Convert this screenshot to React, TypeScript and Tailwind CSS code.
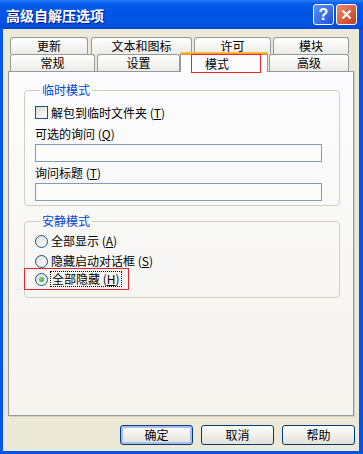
import React from "react";

function Tab({ label, w, ml = 0 }: { label: string; w: number; ml?: number }) {
  return (
    <div
      className="h-[17px] border border-b-0 border-[#919B9C] rounded-t-[3px] bg-gradient-to-b from-white to-[#ECEBE6] flex items-center justify-center leading-none"
      style={{ width: w, marginLeft: ml }}
    >
      {label}
    </div>
  );
}

function Checkbox() {
  return <div className="w-[13px] h-[13px] border border-[#1C5180] bg-gradient-to-br from-[#DCDCD7] to-white" />;
}

function Radio({ checked = false }: { checked?: boolean }) {
  return (
    <div className="w-[13px] h-[13px] rounded-full border border-[#1C5180] bg-gradient-to-br from-[#DCDCD7] to-white flex items-center justify-center">
      {checked && <div className="w-[5px] h-[5px] rounded-full bg-[radial-gradient(circle_at_35%_35%,#7FE07B,#1E9E1E)]" />}
    </div>
  );
}

function Btn({ label, def = false }: { label: string; def?: boolean }) {
  return (
    <button
      className={
        "w-[73px] h-[20px] border border-[#003C74] rounded-[3px] bg-gradient-to-b from-white to-[#E3E0D6] flex items-center justify-center leading-none " +
        (def ? "shadow-[inset_0_0_0_2px_#A6BEF0]" : "")
      }
    >
      {label}
    </button>
  );
}

export default function App() {
  return (
    <div className="w-[363px] h-[454px] flex flex-col bg-[#0055E6] font-['Noto_Sans_CJK_SC',sans-serif] text-[12px] text-black">
      <div className="h-[29px] shrink-0 flex items-center pl-[6px] pr-[6px] bg-[linear-gradient(to_bottom,#2B7BF6_0%,#0A5EEE_12%,#0055E6_40%,#0054E3_80%,#0148D0_100%)]">
        <span className="flex-1 text-white font-bold text-[14px] leading-none [text-shadow:1px_1px_0_#0A1A8C]">
          高级自解压选项
        </span>
        <div className="w-[21px] h-[21px] rounded-[3px] border border-white bg-gradient-to-br from-[#5C93F8] to-[#1F4FD8] flex items-center justify-center text-white font-bold text-[16px] leading-none font-['Liberation_Sans',sans-serif]">
          ?
        </div>
        <div className="w-[21px] h-[21px] ml-[2px] rounded-[3px] border border-white bg-gradient-to-br from-[#E98A6D] to-[#C7391A] flex items-center justify-center">
          <svg width="11" height="11" viewBox="0 0 11 11">
            <path d="M1.5 1.5L9.5 9.5M9.5 1.5L1.5 9.5" stroke="white" strokeWidth="2.2" />
          </svg>
        </div>
      </div>

      <div className="flex-1 ml-[3px] mr-[4px] mb-[3px] bg-[#ECE9D8] flex flex-col pt-[8px] px-[5px] pb-[6px]">
        <div className="flex pl-[2px]">
          <Tab label="更新" w={78} />
          <Tab label="文本和图标" w={101} ml={3} />
          <Tab label="许可" w={77} ml={2} />
          <Tab label="模块" w={76} ml={2} />
        </div>
        <div className="flex items-end pl-[2px] h-[17px]">
          <Tab label="常规" w={85} />
          <Tab label="设置" w={83} ml={2} />
          <div className="relative z-10 w-[88px] h-[20px] -mb-[1px] border-x border-[#919B9C] rounded-t-[3px] bg-[#FCFCFE] flex flex-col">
            <div className="h-[3px] -mx-[1px] rounded-t-[3px] bg-gradient-to-b from-[#FFC83C] to-[#E68B2C]" />
            <div className="flex-1 flex items-center justify-center leading-none -ml-[14px]">模式</div>
            <div className="absolute left-[10px] top-[2px] w-[70px] h-[19px] border border-[#E5252A]" />
          </div>
          <Tab label="高级" w={80} ml={1} />
        </div>

        <div className="flex-1 border border-[#919B9C] shadow-[1px_1px_0_#D0CEBF] bg-gradient-to-b from-[#FCFCFE] to-[#F4F3EE] pt-[10px] pl-[15px] pr-[13px]">
          <fieldset className="h-[124px] border border-[#D0D0BF] rounded-[4px] pl-[10px]">
            <legend className="ml-[5px] px-[2px] text-[#0046D5] leading-[16px]">临时模式</legend>
            <div className="flex items-center gap-[3px] mt-[8px] h-[13px]">
              <Checkbox />
              <span className="leading-none">
                解包到临时文件夹 (<u>T</u>)
              </span>
            </div>
            <div className="mt-[8px] leading-[14px]">
              可选的询问 (<u>Q</u>)
            </div>
            <div className="mt-[3px] w-[287px] h-[18px] border border-[#7F9DB9] bg-[#FBFBF9]" />
            <div className="mt-[4px] leading-[14px]">
              询问标题 (<u>T</u>)
            </div>
            <div className="mt-[3px] w-[287px] h-[18px] border border-[#7F9DB9] bg-[#FBFBF9]" />
          </fieldset>

          <fieldset className="mt-[7px] h-[85px] border border-[#D0D0BF] rounded-[4px] pl-[10px]">
            <legend className="ml-[5px] px-[2px] text-[#0046D5] leading-[16px]">安静模式</legend>
            <div className="flex items-center gap-[3px] mt-[4px] h-[16px]">
              <Radio />
              <span className="leading-none">
                全部显示 (<u>A</u>)
              </span>
            </div>
            <div className="flex items-center gap-[3px] mt-[4px] h-[16px]">
              <Radio />
              <span className="leading-none">
                隐藏启动对话框 (<u>S</u>)
              </span>
            </div>
            <div className="relative flex items-center gap-[2px] mt-[2px] h-[16px]">
              <Radio checked />
              <span className="leading-none border border-dotted border-black px-[1px] py-[1px]">
                全部隐藏 (<u>H</u>)
              </span>
              <div className="absolute -left-[11px] -top-[3px] w-[105px] h-[22px] border border-[#E5252A]" />
            </div>
          </fieldset>
        </div>

        <div className="flex justify-end gap-[8px] mt-[9px] -mr-[1px]">
          <Btn label="确定" def />
          <Btn label="取消" />
          <Btn label="帮助" />
        </div>
      </div>
    </div>
  );
}
